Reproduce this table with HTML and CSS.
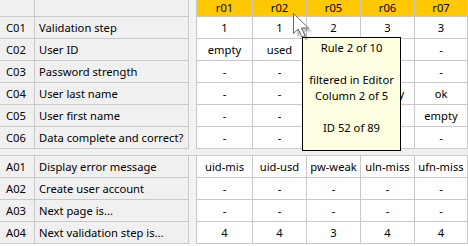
FILE: index.html
```
<!DOCTYPE html>
<html>
<head>
<meta charset="utf-8">
<link rel="stylesheet" href="styles.css">
</head>
<body>
<div class="sheet">
  <div class="grid">
    <div class="c hc"></div><div class="c hl"></div><div class="c gap"></div>
    <div class="c hd">r01</div><div class="c hd">r02</div><div class="c hd">r05</div><div class="c hd">r06</div><div class="c hd last">r07</div>

    <div class="c code">C01</div><div class="c lab">Validation step</div><div class="c gap"></div>
    <div class="c v">1</div><div class="c v">1</div><div class="c v">2</div><div class="c v">3</div><div class="c v last">3</div>

    <div class="c code">C02</div><div class="c lab">User ID</div><div class="c gap"></div>
    <div class="c v">empty</div><div class="c v">used</div><div class="c v"></div><div class="c v"></div><div class="c v last">-</div>

    <div class="c code">C03</div><div class="c lab">Password strength</div><div class="c gap"></div>
    <div class="c v">-</div><div class="c v">-</div><div class="c v"></div><div class="c v"></div><div class="c v last">-</div>

    <div class="c code">C04</div><div class="c lab">User last name</div><div class="c gap"></div>
    <div class="c v">-</div><div class="c v">-</div><div class="c v"></div><div class="c v">empty</div><div class="c v last">ok</div>

    <div class="c code">C05</div><div class="c lab">User first name</div><div class="c gap"></div>
    <div class="c v">-</div><div class="c v">-</div><div class="c v"></div><div class="c v"></div><div class="c v last">empty</div>

    <div class="c code">C06</div><div class="c lab">Data complete and correct?</div><div class="c gap"></div>
    <div class="c v">-</div><div class="c v">-</div><div class="c v"></div><div class="c v"></div><div class="c v last">-</div>

    <div class="sep"></div>

    <div class="c code">A01</div><div class="c lab">Display error message</div><div class="c gap"></div>
    <div class="c v">uid-mis</div><div class="c v">uid-usd</div><div class="c v">pw-weak</div><div class="c v">uln-miss</div><div class="c v last">ufn-miss</div>

    <div class="c code">A02</div><div class="c lab">Create user account</div><div class="c gap"></div>
    <div class="c v">-</div><div class="c v">-</div><div class="c v">-</div><div class="c v">-</div><div class="c v last">-</div>

    <div class="c code">A03</div><div class="c lab">Next page is...</div><div class="c gap"></div>
    <div class="c v">-</div><div class="c v">-</div><div class="c v">-</div><div class="c v">-</div><div class="c v last">-</div>

    <div class="c code">A04</div><div class="c lab">Next validation step is...</div><div class="c gap"></div>
    <div class="c v">4</div><div class="c v">4</div><div class="c v">3</div><div class="c v">4</div><div class="c v last">4</div>
  </div>

  <div class="tooltip">
    <div>Rule 2 of 10</div>
    <div>&nbsp;</div>
    <div>filtered in Editor</div>
    <div>Column 2 of 5</div>
    <div>&nbsp;</div>
    <div>ID 52 of 89</div>
  </div>

  <svg class="cursor" width="22" height="28" viewBox="0 0 22 28">
    <path d="M2.5 2.5 L2.5 22.5 L7.2 18 L10.8 26 L14 24.6 L10.4 17 L17.5 17 Z" fill="#000" opacity="0.22" transform="translate(1.5,1.5)"/>
    <path d="M0.5 0.5 L0.5 20.5 L5.2 16 L8.8 24 L12 22.6 L8.4 15 L15.5 15 Z" fill="#fff" stroke="#666" stroke-width="1" stroke-linejoin="round"/>
  </svg>
</div>
</body>
</html>
```

FILE: styles.css
```
html, body {
  margin: 0;
  padding: 0;
  background: #fff;
}

.sheet {
  position: relative;
  width: 468px;
  height: 246px;
  overflow: hidden;
  font-family: "Noto Sans", "Open Sans", sans-serif;
  font-size: 11.2px;
  color: #000;
}

.grid {
  display: grid;
  grid-template-columns: 35px 154px 8px 56px 54px 54px 54px 53px;
  grid-template-rows: 17px repeat(6, 22px) 7px repeat(4, 22px);
}

.c {
  box-sizing: border-box;
  border-right: 1px solid #c9c9c9;
  border-bottom: 1px solid #c9c9c9;
  display: flex;
  align-items: center;
  white-space: nowrap;
  overflow: hidden;
  line-height: 1;
  padding-top: 1px;
}

.hc, .hl {
  background: #f0f0f0;
}

.gap {
  background: #f3f3f3;
  border-bottom: none;
}

.hd {
  background: #ffc800;
  justify-content: center;
  padding-top: 0;
}

.code {
  background: #f0f0f0;
  padding-left: 6px;
}

.lab {
  background: #f0f0f0;
  padding-left: 4px;
}

.v {
  background: #fff;
  justify-content: center;
}

.sep {
  grid-column: 1 / -1;
  box-sizing: border-box;
  background: #f0f0f0;
  border-bottom: 1px solid #c9c9c9;
}

.tooltip {
  position: absolute;
  left: 302px;
  top: 37px;
  width: 99px;
  height: 114px;
  box-sizing: border-box;
  background: #ffffe1;
  border: 1px solid #000;
  padding-top: 2px;
  text-align: center;
  line-height: 16px;
}

.cursor {
  position: absolute;
  left: 293px;
  top: 13px;
}
```
